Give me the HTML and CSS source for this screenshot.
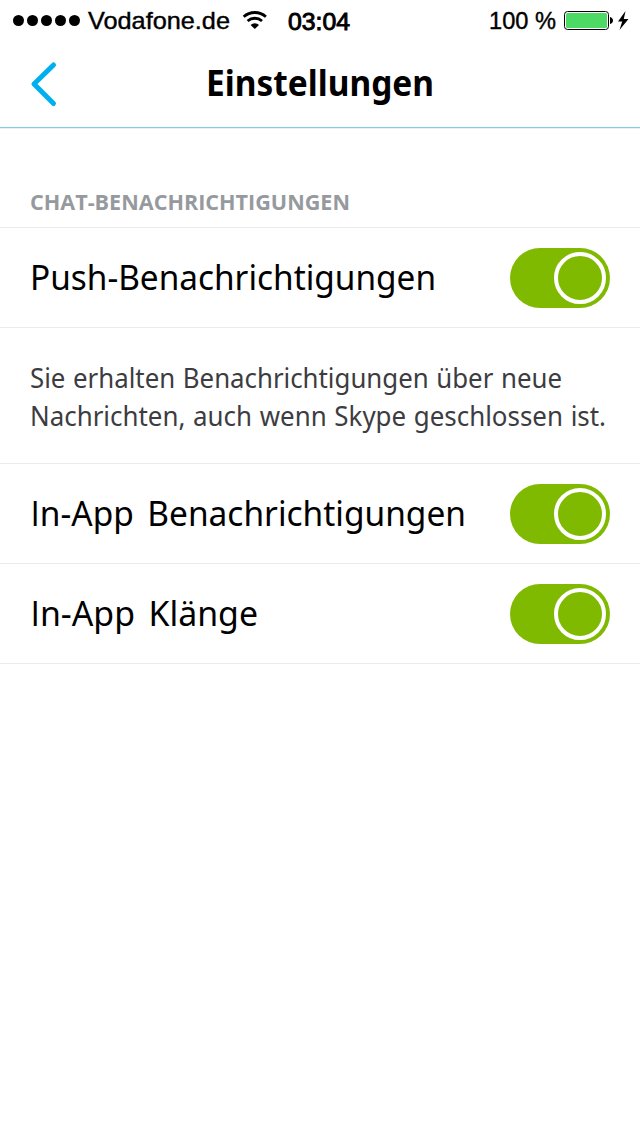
FILE: index.html
```html
<!DOCTYPE html>
<html lang="de">
<head>
<meta charset="utf-8">
<title>Einstellungen</title>
<link rel="stylesheet" href="styles.css">
</head>
<body>
<header class="status">
  <svg class="signal" width="68" height="12" viewBox="0 0 68 12"><circle cx="6.500" cy="6.500" r="5.500"/><circle cx="20.500" cy="6.500" r="5.500"/><circle cx="34.500" cy="6.500" r="5.500"/><circle cx="48.500" cy="6.500" r="5.500"/><circle cx="62.500" cy="6.500" r="5.500"/></svg>
  <svg class="carrier" width="144" height="40"><text x="0" y="29" textLength="142" lengthAdjust="spacingAndGlyphs">Vodafone.de</text></svg>
  <svg class="wifi" width="26" height="20" viewBox="0 0 26 20"><path d="M1.700 6.800a16.500 16.500 0 0 1 22.200 0M5.600 11a10.800 10.800 0 0 1 14.400 0" fill="none" stroke="#000" stroke-width="2.800"/><path d="M8.600 15a6.200 6.200 0 0 1 8.400 0L12.800 19z"/></svg>
  <svg class="clock" width="64" height="40"><text x="0" y="30" textLength="62" lengthAdjust="spacingAndGlyphs">03:04</text></svg>
  <svg class="percent" width="68" height="40"><text x="0" y="29" textLength="67" lengthAdjust="spacingAndGlyphs">100 %</text></svg>
  <svg class="battery" width="66" height="20" viewBox="0 0 66 20"><rect x=".5" y="1.500" width="44" height="18" rx="3" fill="#fff" stroke="#000"/><rect x="2" y="3" width="41" height="15" rx="1.500" fill="#4cd964"/><path d="M46 7c4 1 4 6 0 7z"/><path d="M61.500 1L54 11.500h4.200L55.500 20 64.500 9h-4.700z"/></svg>
</header>
<nav class="navbar">
  <svg class="back" width="28" height="44" viewBox="0 0 28 44"><path d="M23.500 3L4 22l19.500 19.500" fill="none" stroke="#00aff0" stroke-width="5" stroke-linecap="round" stroke-linejoin="round"/></svg>
  <svg class="title" width="228" height="50"><text x="0" y="36.500" textLength="228" lengthAdjust="spacingAndGlyphs">Einstellungen</text></svg>
</nav>
<main>
  <svg class="section" width="340" height="36"><text x="0" y="24" textLength="320" lengthAdjust="spacingAndGlyphs">CHAT-BENACHRICHTIGUNGEN</text></svg>
  <div class="row"><svg class="label" width="460" height="60"><text x="0" y="41.500" textLength="406" lengthAdjust="spacingAndGlyphs">Push-Benachrichtigungen</text></svg><span class="toggle"><span class="knob"></span></span></div>
  <svg class="note" width="600" height="135"><text x="0" y="60" textLength="532" lengthAdjust="spacingAndGlyphs">Sie erhalten Benachrichtigungen über neue</text><text x="0" y="98" textLength="576" lengthAdjust="spacingAndGlyphs">Nachrichten, auch wenn Skype geschlossen ist.</text></svg>
  <div class="row"><svg class="label" width="460" height="60"><text x="0.500" y="41.500" textLength="435.500" lengthAdjust="spacingAndGlyphs"><tspan class="plain">I</tspan>n-App Benachrichtigungen</text></svg><span class="toggle"><span class="knob"></span></span></div>
  <div class="row joined"><svg class="label" width="460" height="60"><text x="0.500" y="41.500" textLength="227.500" lengthAdjust="spacingAndGlyphs"><tspan class="plain">I</tspan>n-App Klänge</text></svg><span class="toggle"><span class="knob"></span></span></div>
</main>
</body>
</html>
```
FILE: styles.css
```css
* { box-sizing: border-box; }
body { margin: 0; background: #fff; color: #000; font-family: "Noto Sans", sans-serif; }
svg { display: block; flex: none; overflow: visible; }
.status { height: 40px; display: flex; align-items: center; padding-left: 12px; font-family: "Liberation Sans", Arial, sans-serif; font-size: 24px; }
.carrier, .percent { stroke: #000; stroke-width: .4px; }
.carrier { margin-left: 8px; }
.wifi { margin-left: 10px; }
.clock { margin-left: 20px; stroke: #000; stroke-width: .9px; font-size: 23.5px; }
.percent { margin-left: 137px; }
.battery { margin-left: 7px; }
.navbar { height: 88px; display: flex; align-items: center; padding-left: 30px; border-bottom: 1px solid #80cdec; box-shadow: 0 1px #eee; }
.title { margin-left: 148px; font-size: 35px; font-weight: 700; }
.section { margin: 50px 0 0 30px; font-family: "Open Sans", sans-serif; font-size: 21.5px; font-weight: 700; fill: #969a9e; padding-top: 8px; height: 49px; }
.row { height: 101px; display: flex; align-items: center; justify-content: space-between; padding: 0 30px; border: solid #eaeaec; border-width: 1px 0; }
.joined { height: 100px; border-top: 0; }
.label { font-size: 35px; word-spacing: 5px; }
.plain { font-family: "Open Sans", sans-serif; }
.toggle { width: 100px; height: 60px; border-radius: 30px; background: #80ba00; display: flex; align-items: center; justify-content: flex-end; padding-right: 4px; }
.knob { width: 52px; height: 52px; border: 4px solid #fff; border-radius: 50%; }
.note { margin-left: 30px; font-size: 27px; fill: #3c3c41; word-spacing: 1px; }
```
